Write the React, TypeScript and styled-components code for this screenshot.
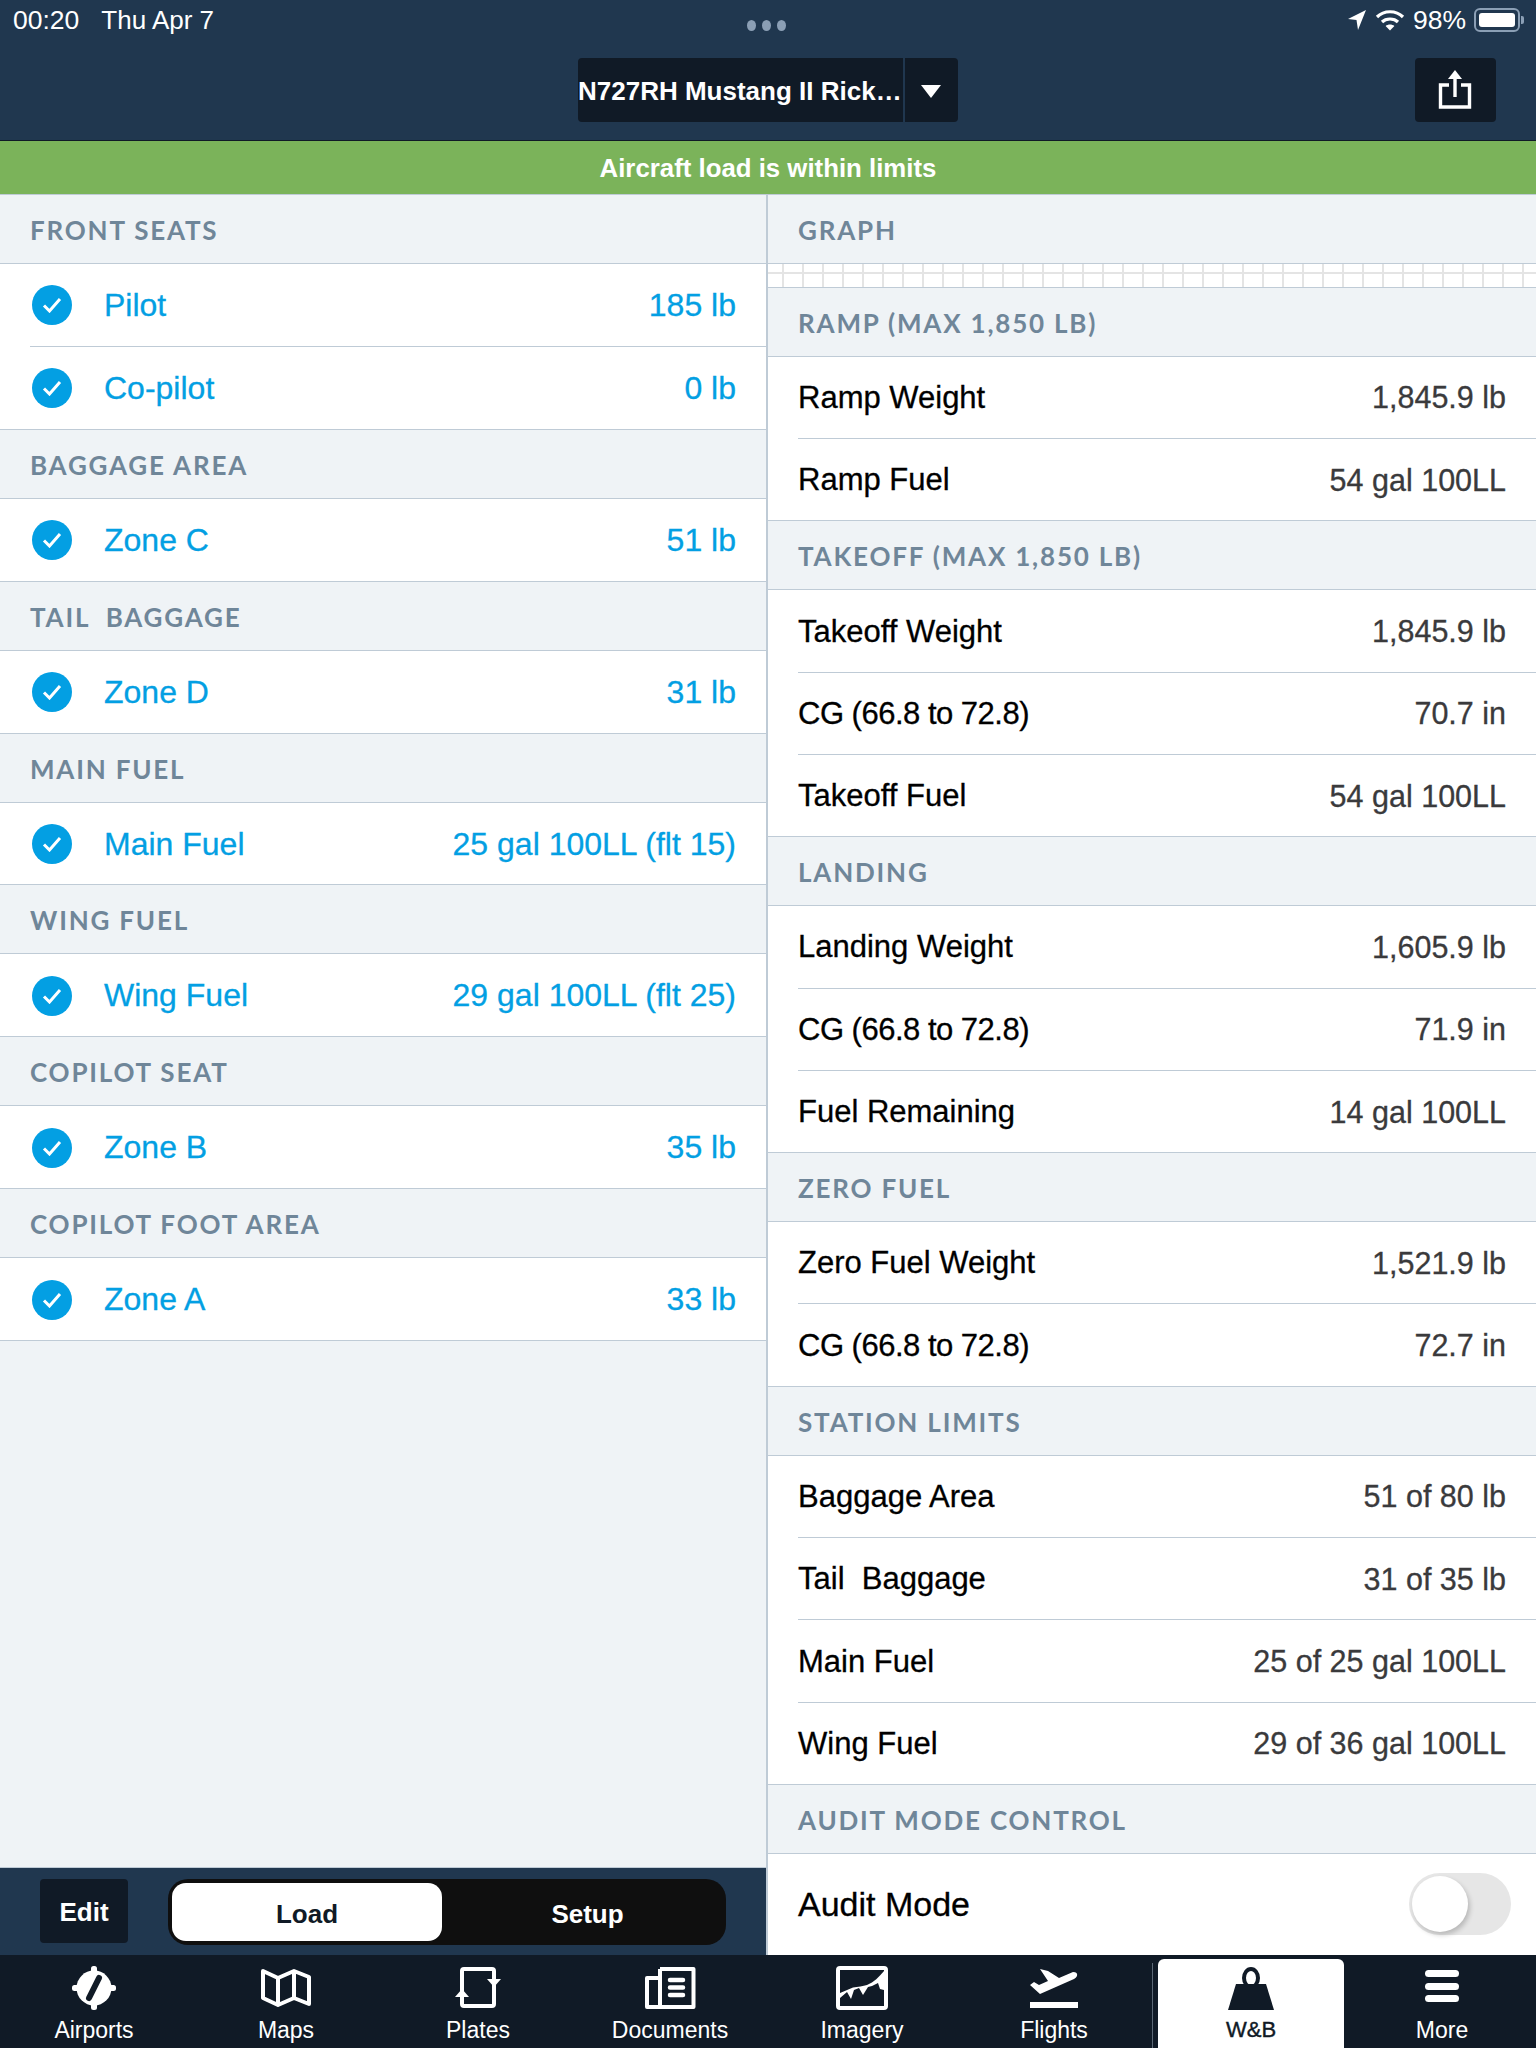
import styled, { createGlobalStyle } from "styled-components";

type Row = { label: string; value: string };
type Section = { title: string; rows: Row[] };

const loadSections: Section[] = [
  { title: "FRONT SEATS", rows: [{ label: "Pilot", value: "185 lb" }, { label: "Co-pilot", value: "0 lb" }] },
  { title: "BAGGAGE AREA", rows: [{ label: "Zone C", value: "51 lb" }] },
  { title: "TAIL  BAGGAGE", rows: [{ label: "Zone D", value: "31 lb" }] },
  { title: "MAIN FUEL", rows: [{ label: "Main Fuel", value: "25 gal 100LL (flt 15)" }] },
  { title: "WING FUEL", rows: [{ label: "Wing Fuel", value: "29 gal 100LL (flt 25)" }] },
  { title: "COPILOT SEAT", rows: [{ label: "Zone B", value: "35 lb" }] },
  { title: "COPILOT FOOT AREA", rows: [{ label: "Zone A", value: "33 lb" }] },
];

const resultSections: Section[] = [
  { title: "RAMP (MAX 1,850 LB)", rows: [{ label: "Ramp Weight", value: "1,845.9 lb" }, { label: "Ramp Fuel", value: "54 gal 100LL" }] },
  { title: "TAKEOFF (MAX 1,850 LB)", rows: [{ label: "Takeoff Weight", value: "1,845.9 lb" }, { label: "CG (66.8 to 72.8)", value: "70.7 in" }, { label: "Takeoff Fuel", value: "54 gal 100LL" }] },
  { title: "LANDING", rows: [{ label: "Landing Weight", value: "1,605.9 lb" }, { label: "CG (66.8 to 72.8)", value: "71.9 in" }, { label: "Fuel Remaining", value: "14 gal 100LL" }] },
  { title: "ZERO FUEL", rows: [{ label: "Zero Fuel Weight", value: "1,521.9 lb" }, { label: "CG (66.8 to 72.8)", value: "72.7 in" }] },
  { title: "STATION LIMITS", rows: [{ label: "Baggage Area", value: "51 of 80 lb" }, { label: "Tail  Baggage", value: "31 of 35 lb" }, { label: "Main Fuel", value: "25 of 25 gal 100LL" }, { label: "Wing Fuel", value: "29 of 36 gal 100LL" }] },
];

const tabs = [
  { label: "Airports", icon: <AirportsIcon /> },
  { label: "Maps", icon: <MapsIcon /> },
  { label: "Plates", icon: <PlatesIcon /> },
  { label: "Documents", icon: <DocumentsIcon /> },
  { label: "Imagery", icon: <ImageryIcon /> },
  { label: "Flights", icon: <FlightsIcon /> },
  { label: "W&B", icon: <WeightIcon />, active: true },
  { label: "More", icon: <MoreIcon /> },
];

function AirportsIcon() {
  return (
    <svg width="44" height="44" viewBox="0 0 44 44">
      <circle cx="22" cy="22" r="17.5" fill="#fff" />
      <rect x="19" y="0" width="6" height="44" rx="2.5" fill="#fff" />
      <rect x="0" y="19" width="44" height="6" rx="2.5" fill="#fff" />
      <line x1="27" y1="12" x2="17" y2="32" stroke="#101a26" strokeWidth="6" strokeLinecap="round" />
    </svg>
  );
}

function MapsIcon() {
  return (
    <svg width="52" height="40" viewBox="0 0 52 40" fill="none" stroke="#fff" strokeWidth="4" strokeLinejoin="round">
      <path d="M3 3 L18 10 L34 3 L49 9 V36 L34 30 L18 37 L3 30 Z" />
      <path d="M18 10 V37 M34 3 V30" />
    </svg>
  );
}

function PlatesIcon() {
  return (
    <svg width="48" height="44" viewBox="0 0 48 44">
      <rect x="8" y="3" width="32" height="37" rx="2" fill="none" stroke="#fff" strokeWidth="4" />
      <path d="M33 13 H47 L40 21 Z" fill="#fff" />
      <path d="M1 31 H15 L8 23 Z" fill="#fff" />
    </svg>
  );
}

function DocumentsIcon() {
  return (
    <svg width="52" height="44" viewBox="0 0 52 44" fill="none" stroke="#fff" strokeWidth="4">
      <path d="M16 3 H49.5 V41 H3 V12 H16 M16 3 V41" strokeLinejoin="round" />
      <path d="M26 14 H39 M26 21.5 H39 M26 29 H39" strokeWidth="4.5" strokeLinecap="round" />
    </svg>
  );
}

function ImageryIcon() {
  return (
    <svg width="52" height="44" viewBox="0 0 52 44">
      <rect x="2" y="2" width="48" height="40" rx="2" fill="none" stroke="#fff" strokeWidth="4" />
      <path d="M4 27 L17 21.5 C22 21 27 20 31 19 C38 16 43 11 48 5 V24 L44 23 L42 17 L36 20 L32 21 L27 29 L23 22 L18 24 L15 33 L11 26 L4 32 Z" fill="#fff" />
    </svg>
  );
}

function FlightsIcon() {
  return (
    <svg width="50" height="44" viewBox="0 0 48 44" fill="#fff">
      <path d="M10 3 L18 5 L29 12 L43 6 Q48 6 47 10 Q46 12 44 13 L10 28 L0 19 L4 16 L9 19 L18 15 Z" />
      <rect y="36" width="48" height="6" />
    </svg>
  );
}

function WeightIcon() {
  return (
    <svg width="48" height="44" viewBox="0 0 48 44" fill="#101a26">
      <ellipse cx="24" cy="12" rx="7" ry="9" fill="none" stroke="#101a26" strokeWidth="4" />
      <path d="M9 18 H39 L47 44 H1 Z" />
    </svg>
  );
}

function MoreIcon() {
  return (
    <svg width="36" height="44" viewBox="0 0 36 44" fill="#fff">
      <rect x="1" y="4" width="34" height="7" rx="3.5" />
      <rect x="1" y="17" width="34" height="7" rx="3.5" />
      <rect x="1" y="29" width="34" height="7" rx="3.5" />
    </svg>
  );
}

export default function App() {
  return (
    <Page>
      <GlobalStyle />
      <Header>
        <StatusBar>
          <StatusLeft>
            <span>00:20</span>
            <span>Thu Apr 7</span>
          </StatusLeft>
          <Dots>
            <i />
            <i />
            <i />
          </Dots>
          <StatusRight>
            <svg width="20" height="24" viewBox="0 0 20 24" fill="#fff">
              <path d="M19 2 L11 22 L9.5 12 L1 11 Z" />
            </svg>
            <svg width="30" height="24" viewBox="0 0 30 24" fill="none" stroke="#fff" strokeWidth="3.2">
              <path d="M2 9 C9 2 21 2 28 9" />
              <path d="M7 14 C11 10 19 10 23 14" />
              <path d="M15 22.5 L10.6 18 C13 16 17 16 19.4 18 Z" fill="#fff" stroke="none" />
            </svg>
            <span>98%</span>
            <Battery>
              <b />
            </Battery>
          </StatusRight>
        </StatusBar>
        <NavBar>
          <AircraftPicker>
            <AircraftName>N727RH Mustang II Rick…</AircraftName>
            <PickerArrow />
          </AircraftPicker>
          <ShareButton>
            <svg width="34" height="40" viewBox="0 0 34 40" fill="none" stroke="#fff" strokeWidth="3.4">
              <path d="M11 15 H2.5 V37 H31.5 V15 H23" />
              <path d="M17 27 V6" />
              <path d="M17 0 L24 9 H10 Z" fill="#fff" stroke="none" />
            </svg>
          </ShareButton>
        </NavBar>
      </Header>
      <LimitBanner>Aircraft load is within limits</LimitBanner>
      <Body>
        <LoadColumn>
          <LoadList>
            {loadSections.map((s) => (
              <div key={s.title}>
                <SectionTitle>{s.title}</SectionTitle>
                {s.rows.map((r, idx) => (
                  <LoadRow key={r.label} $last={idx === s.rows.length - 1}>
                    <Check>
                      <svg width="20" height="16" viewBox="0 0 20 16" fill="none" stroke="#fff" strokeWidth="3">
                        <path d="M2 8.5 L7.5 14 L18 2" />
                      </svg>
                    </Check>
                    <RowLabel $blue>{r.label}</RowLabel>
                    <RowValue $blue>{r.value}</RowValue>
                  </LoadRow>
                ))}
              </div>
            ))}
          </LoadList>
          <Toolbar>
            <EditButton>Edit</EditButton>
            <Segments>
              <Segment $active>Load</Segment>
              <Segment>Setup</Segment>
            </Segments>
          </Toolbar>
        </LoadColumn>
        <ResultColumn>
          <SectionTitle>GRAPH</SectionTitle>
          <GraphStrip />
          {resultSections.map((s) => (
            <div key={s.title}>
              <SectionTitle>{s.title}</SectionTitle>
              {s.rows.map((r, idx) => (
                <ListRow key={r.label + r.value} $last={idx === s.rows.length - 1}>
                  <RowLabel $tight={r.label.startsWith("CG")}>{r.label}</RowLabel>
                  <RowValue>{r.value}</RowValue>
                </ListRow>
              ))}
            </div>
          ))}
          <SectionTitle>AUDIT MODE CONTROL</SectionTitle>
          <AuditRow>
            <AuditLabel>Audit Mode</AuditLabel>
            <Toggle>
              <Knob />
            </Toggle>
          </AuditRow>
        </ResultColumn>
      </Body>
      <TabBar>
        {tabs.map((t) => (
          <Tab key={t.label} $active={t.active}>
            <TabIcon>{t.icon}</TabIcon>
            {t.label}
          </Tab>
        ))}
      </TabBar>
    </Page>
  );
}

const GlobalStyle = createGlobalStyle`
  html, body {
    margin: 0;
    padding: 0;
    background: #eff3f6;
  }
  * {
    box-sizing: border-box;
  }
`;

const Page = styled.div`
  width: 1536px;
  height: 2048px;
  display: flex;
  flex-direction: column;
  overflow: hidden;
  font-family: "Liberation Sans", Arial, sans-serif;
`;

const Header = styled.header`
  height: 141px;
  background: #20374f;
  border-bottom: 1px solid #101a26;
  color: #fff;
`;

const StatusBar = styled.div`
  height: 58px;
  padding: 0 16px 18px 13px;
  display: grid;
  grid-template-columns: 1fr auto 1fr;
  align-items: center;
  font-size: 26.5px;
`;

const StatusLeft = styled.div`
  display: flex;
  gap: 22px;
  & > span:last-child {
    font-size: 26px;
  }
`;

const Dots = styled.div`
  display: flex;
  gap: 6px;
  margin-top: 10px;
  & > i {
    width: 9px;
    height: 11px;
    border-radius: 50%;
    background: #8b9fb5;
  }
`;

const StatusRight = styled.div`
  display: flex;
  justify-content: flex-end;
  align-items: center;
  gap: 8px;
`;

const Battery = styled.div`
  position: relative;
  width: 46px;
  height: 24px;
  padding: 3px;
  border: 2px solid #8b9fb5;
  border-radius: 6px;
  & > b {
    display: block;
    height: 100%;
    background: #fff;
    border-radius: 3px;
  }
  &::after {
    content: "";
    position: absolute;
    right: -6px;
    top: 6px;
    width: 3px;
    height: 8px;
    background: #8b9fb5;
    border-radius: 0 2px 2px 0;
  }
`;

const NavBar = styled.div`
  position: relative;
  height: 64px;
  display: flex;
  justify-content: center;
`;

const AircraftPicker = styled.div`
  width: 380px;
  height: 64px;
  display: flex;
  background: #101a26;
  border-radius: 4px;
`;

const AircraftName = styled.div`
  width: 327px;
  border-right: 2px solid #20374f;
  font-size: 26px;
  font-weight: 700;
  line-height: 66px;
  white-space: nowrap;
`;

const PickerArrow = styled.div`
  flex: 1;
  position: relative;
  &::after {
    content: "";
    position: absolute;
    left: 16px;
    top: 27px;
    border-left: 10px solid transparent;
    border-right: 10px solid transparent;
    border-top: 13px solid #fff;
  }
`;

const ShareButton = styled.div`
  position: absolute;
  right: 40px;
  top: 0;
  width: 81px;
  height: 64px;
  padding-right: 2px;
  display: flex;
  align-items: center;
  justify-content: center;
  background: #101a26;
  border-radius: 4px;
`;

const LimitBanner = styled.div`
  height: 54px;
  background: #7bb35a;
  border-bottom: 1px solid #bfcbd6;
  color: #fff;
  font-size: 25.8px;
  font-weight: 700;
  line-height: 54px;
  text-align: center;
`;

const Body = styled.main`
  flex: 1;
  min-height: 0;
  display: flex;
`;

const LoadColumn = styled.section`
  width: 768px;
  display: flex;
  flex-direction: column;
  border-right: 2px solid #bfcbd6;
`;

const LoadList = styled.div`
  flex: 1;
  background: #eff3f6;
`;

const ResultColumn = styled.section`
  flex: 1;
  min-width: 0;
  display: flex;
  flex-direction: column;
  background: #eff3f6;
`;

const SectionTitle = styled.div`
  height: 69px;
  padding-left: 30px;
  border-bottom: 1px solid #bfcbd6;
  color: #6f8699;
  font-family: Lato, "Liberation Sans", sans-serif;
  font-size: 26px;
  font-weight: 700;
  letter-spacing: 1.8px;
  line-height: 70px;
  white-space: pre;
`;

const ListRow = styled.div<{ $last: boolean }>`
  position: relative;
  height: 82.3px;
  padding: 0 30px;
  display: flex;
  align-items: center;
  background: #fff;
  &::after {
    content: "";
    position: absolute;
    left: ${(p) => (p.$last ? 0 : "30px")};
    right: 0;
    bottom: 0;
    height: 1px;
    background: #bfcbd6;
  }
`;

const LoadRow = styled(ListRow)`
  height: 82.9px;
`;

const Check = styled.div`
  width: 40px;
  height: 40px;
  margin: 0 32px 0 2px;
  display: flex;
  align-items: center;
  justify-content: center;
  border-radius: 50%;
  background: #039fe3;
`;

const RowLabel = styled.div<{ $blue?: boolean; $tight?: boolean }>`
  color: ${(p) => (p.$blue ? "#039fe3" : "#000")};
  font-size: ${(p) => (p.$blue ? "32px" : "31px")};
  letter-spacing: ${(p) => (p.$tight ? "-0.5px" : 0)};
  -webkit-text-stroke: 0.3px currentColor;
  white-space: pre;
`;

const RowValue = styled.div<{ $blue?: boolean }>`
  margin-left: auto;
  color: ${(p) => (p.$blue ? "#039fe3" : "#3a3a3c")};
  font-size: ${(p) => (p.$blue ? "32px" : "30.5px")};
  -webkit-text-stroke: 0.3px currentColor;
`;

const GraphStrip = styled.div`
  height: 23.8px;
  border-bottom: 1px solid #bfcbd6;
  background-color: #fff;
  background-image:
    linear-gradient(#e4e4e4, #e4e4e4),
    repeating-linear-gradient(90deg, transparent 0 14px, #e4e4e4 14px 16px, transparent 16px 20px);
  background-size: 100% 2px, 100% 100%;
  background-position: 0 8px, 0 0;
  background-repeat: no-repeat;
`;

const AuditRow = styled.div`
  flex: 1;
  padding: 0 25px 0 30px;
  display: flex;
  align-items: center;
  background: #fff;
`;

const AuditLabel = styled.div`
  color: #000;
  font-size: 34px;
  -webkit-text-stroke: 0.3px currentColor;
`;

const Toggle = styled.div`
  margin-left: auto;
  width: 102px;
  height: 62px;
  padding: 3px;
  border-radius: 31px;
  background: #e6e6e6;
`;

const Knob = styled.div`
  width: 56px;
  height: 56px;
  border-radius: 50%;
  background: #fff;
  box-shadow: 2px 3px 5px rgba(0, 0, 0, 0.2);
`;

const Toolbar = styled.div`
  height: 88px;
  padding: 11px 40px 0;
  display: flex;
  gap: 40px;
  background: #20374f;
  border-top: 1px solid #bfcbd6;
`;

const EditButton = styled.div`
  width: 88px;
  height: 64px;
  background: #101a26;
  border-radius: 4px;
  color: #fff;
  font-size: 26px;
  font-weight: 700;
  line-height: 66px;
  text-align: center;
`;

const Segments = styled.div`
  width: 558px;
  height: 66px;
  padding: 4px;
  display: flex;
  background: #0f0f0f;
  border-radius: 20px;
`;

const Segment = styled.div<{ $active?: boolean }>`
  flex: ${(p) => (p.$active ? "0 0 270px" : 1)};
  padding-left: ${(p) => (p.$active ? 0 : "11px")};
  border-radius: 14px;
  background: ${(p) => (p.$active ? "#fff" : "transparent")};
  color: ${(p) => (p.$active ? "#101a26" : "#fff")};
  font-size: 26px;
  font-weight: 700;
  line-height: 62px;
  text-align: center;
`;

const TabBar = styled.nav`
  height: 93px;
  display: grid;
  grid-template-columns: repeat(8, 192px);
  background: #101a26;
`;

const Tab = styled.div<{ $active?: boolean }>`
  position: relative;
  margin: ${(p) => (p.$active ? "4px 0 0 6px" : 0)};
  padding: ${(p) => (p.$active ? "6px 0 0" : "10px 4px 0 0")};
  display: flex;
  flex-direction: column;
  align-items: center;
  background: ${(p) => (p.$active ? "#fff" : "transparent")};
  border-radius: ${(p) => (p.$active ? "6px 6px 0 0" : 0)};
  color: ${(p) => (p.$active ? "#101a26" : "#fff")};
  font-size: ${(p) => (p.$active ? "22px" : "23px")};
  -webkit-text-stroke: ${(p) => (p.$active ? "0.4px currentColor" : 0)};
  &:last-child {
    padding: 10px 0 0 4px;
  }
  ${(p) =>
    p.$active &&
    `
    &::before {
      content: "";
      position: absolute;
      left: -6px;
      top: 4px;
      bottom: 0;
      width: 1px;
      background: #5b6876;
    }
  `}
`;

const TabIcon = styled.div`
  height: 46px;
  margin-bottom: 6px;
  display: flex;
  align-items: center;
  justify-content: center;
`;
